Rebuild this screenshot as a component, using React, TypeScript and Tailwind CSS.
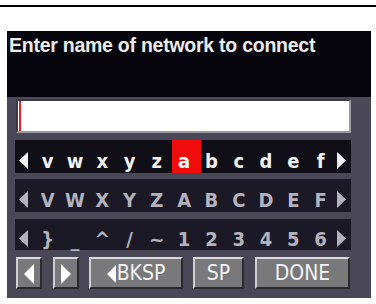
import React from 'react';

const lower = ['v', 'w', 'x', 'y', 'z', 'a', 'b', 'c', 'd', 'e', 'f'];
const upper = ['V', 'W', 'X', 'Y', 'Z', 'A', 'B', 'C', 'D', 'E', 'F'];
const symbols = ['}', '_', '^', '/', '~', '1', '2', '3', '4', '5', '6'];

const keyFont = { fontFamily: '"DejaVu Sans Condensed", "DejaVu Sans", sans-serif' };

const Tri = ({ dir, w, h, color }: { dir: 'l' | 'r'; w: number; h: number; color: string }) => (
  <svg width={w} height={h} viewBox={`0 0 ${w} ${h}`} className="block">
    <polygon points={dir === 'l' ? `${w},0 0,${h / 2} ${w},${h}` : `0,0 ${w},${h / 2} 0,${h}`} fill={color} />
  </svg>
);

// one row of keys: arrow, 11 chars, arrow
const KeyRow = ({
  keys,
  selected,
  bright,
  className,
}: {
  keys: string[];
  selected?: number;
  bright?: boolean;
  className: string;
}) => {
  const color = bright ? '#f2f2f4' : '#b4b3bd';
  return (
    <div className={`ml-[8px] flex w-[336px] items-stretch ${className}`}>
      <div className="flex w-[19px] items-center pl-[4px] pt-[8px]">
        <Tri dir="l" w={9} h={17} color={color} />
      </div>
      {keys.map((k, i) => (
        <div key={i} className="relative flex w-[27.3px] items-center justify-center pt-[8px]">
          {selected === i && <span className="absolute inset-y-0 left-[2px] w-[29px] bg-[#f20d0d]" />}
          <span
            className="relative font-bold text-[20px] leading-none"
            style={{ ...keyFont, color: selected === i ? '#ffffff' : color }}
          >
            {k}
          </span>
        </div>
      ))}
      <div className="flex flex-1 items-center pl-[3px] pt-[8px]">
        <Tri dir="r" w={9} h={17} color={color} />
      </div>
    </div>
  );
};

const Btn = ({ w, children }: { w: string; children: React.ReactNode }) => (
  <div
    className={`${w} flex h-[32px] items-center justify-center border-2 border-t-[#d9d9d9] border-l-[#d0d0d0] border-b-[#2b2a30] border-r-[#2b2a30] bg-[#79797b] pt-[1px] text-[21px] leading-none text-[#f4f4f4]`}
    style={keyFont}
  >
    {children}
  </div>
);

export default function App() {
  return (
    <div className="h-[304px] w-[376px] overflow-hidden bg-white" style={{ fontFamily: '"Liberation Sans", Arial, sans-serif' }}>
      <div className="mt-[5px] h-[2px] bg-black" />
      <div className="ml-[7px] mt-[24px] w-[364px]">
        {/* title */}
        <div className="h-[66px] bg-[#05040c] pl-[2px] pt-[5px]">
          <div className="text-[19.5px] font-bold leading-none tracking-[-0.25px] text-[#ececec]">
            Enter name of network to connect
          </div>
        </div>

        <div className="h-[201px] bg-[#4a4857] pt-[2px]">
          {/* input */}
          <div className="ml-[9px] flex h-[34px] w-[335px] border-2 border-t-[#3c3b45] border-l-[#3c3b45] border-b-[#9a99a4] border-r-[#9a99a4] bg-white">
            <div className="ml-[1px] h-full w-[2px] bg-[#e8202a]" />
          </div>

          <KeyRow keys={lower} selected={5} bright className="mt-[7px] h-[33px] bg-[#100f18]" />
          <KeyRow keys={upper} className="mt-[6px] h-[33px] bg-[#1a1925]" />
          <KeyRow keys={symbols} className="mt-[7px] h-[31px] bg-[#1a1925]" />

          {/* buttons */}
          <div className="ml-[9px] mt-[7px] flex gap-[10px]">
            <Btn w="w-[26px]">
              <Tri dir="l" w={10} h={20} color="#ffffff" />
            </Btn>
            <Btn w="w-[26px] ml-[1px]">
              <Tri dir="r" w={10} h={20} color="#ffffff" />
            </Btn>
            <Btn w="w-[94px]">
              <span className="mr-[1px]">
                <Tri dir="l" w={9} h={18} color="#ffffff" />
              </span>
              BKSP
            </Btn>
            <Btn w="w-[51px]">SP</Btn>
            <Btn w="w-[95px] ml-[1px]">DONE</Btn>
          </div>
        </div>
      </div>
    </div>
  );
}
